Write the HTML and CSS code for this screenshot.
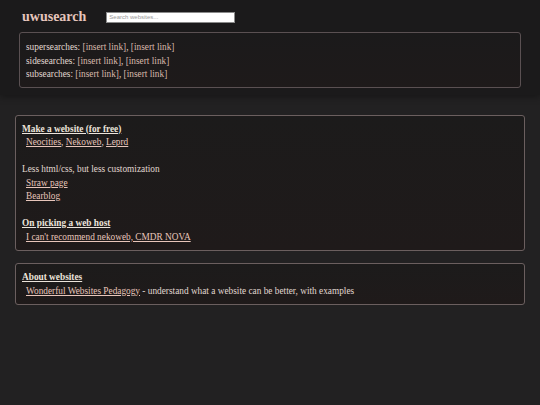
FILE: index.html
```html
<!DOCTYPE html>
<html>
<head>
<meta charset="utf-8">
<link rel="stylesheet" href="styles.css">
</head>
<body>
<header class="top">
  <div class="top-row">
    <h1 class="logo">uwusearch</h1>
    <input class="search" type="text" placeholder="Search websites...">
  </div>
  <div class="related">
    <div>supersearches: <a href="#">[insert link]</a>, <a href="#">[insert link]</a></div>
    <div>sidesearches: <a href="#">[insert link]</a>, <a href="#">[insert link]</a></div>
    <div>subsearches: <a href="#">[insert link]</a>, <a href="#">[insert link]</a></div>
  </div>
</header>
<main class="content">
  <section class="card">
    <h2 class="card-title">Make a website (for free)</h2>
    <div class="item"><a href="#">Neocities</a>, <a href="#">Nekoweb</a>, <a href="#">Leprd</a></div>
    <div class="spacer"></div>
    <div>Less html/css, but less customization</div>
    <div class="item"><a href="#">Straw page</a></div>
    <div class="item"><a href="#">Bearblog</a></div>
    <div class="spacer"></div>
    <h2 class="card-title">On picking a web host</h2>
    <div class="item"><a href="#">I can't recommend nekoweb, CMDR NOVA</a></div>
  </section>
  <section class="card">
    <h2 class="card-title">About websites</h2>
    <div class="item"><a href="#">Wonderful Websites Pedagogy</a> - understand what a website can be better, with examples</div>
  </section>
</main>
</body>
</html>
```
FILE: styles.css
```css
html, body {
  margin: 0;
  padding: 0;
  background: #222122;
  color: #e0d8d1;
  font-family: "Liberation Serif", "Times New Roman", serif;
  font-size: 9.3px;
  line-height: 13.5px;
  min-height: 405px;
}
.top {
  background: #1b1a1b;
  padding: 7px 19px 7px 19px;
  box-shadow: 0 2px 7px rgba(0,0,0,0.35);
}
.top-row {
  display: flex;
  align-items: center;
  gap: 20px;
  height: 20px;
  margin-bottom: 5px;
}
.logo {
  margin: 0 0 0 3px;
  font-size: 14px;
  line-height: 18px;
  font-weight: bold;
  color: #e6c5bb;
}
.search {
  width: 129px;
  height: 11px;
  box-sizing: border-box;
  border: 1px solid #8a8a8a;
  padding: 0 2px;
  font-family: "Liberation Sans", Arial, sans-serif;
  font-size: 6px;
  background: #fff;
}
.search::placeholder { color: #9a9a9a; }
.related {
  border: 1px solid #5a5052;
  border-radius: 3px;
  padding: 8px 6px 5px 6px;
  background: linear-gradient(#1b1a1b, #1e1a1a);
}
.related a {
  color: #d7b8ab;
  text-decoration: none;
}
.content {
  padding: 20px 15px;
  display: flex;
  flex-direction: column;
  gap: 12px;
}
.card {
  border: 1px solid #6b5f5f;
  border-radius: 3px;
  padding: 7px 6px 6px 6px;
  background: linear-gradient(#1c1b1b, #1f1a1a);
}
.card-title {
  margin: 0;
  font-size: 9.3px;
  line-height: 13.5px;
  font-weight: bold;
  text-decoration: underline;
  color: #ece4dc;
}
.item {
  padding-left: 4px;
}
.item a {
  color: #e8c6bb;
  text-decoration: underline;
}
.spacer {
  height: 13.5px;
}
```
